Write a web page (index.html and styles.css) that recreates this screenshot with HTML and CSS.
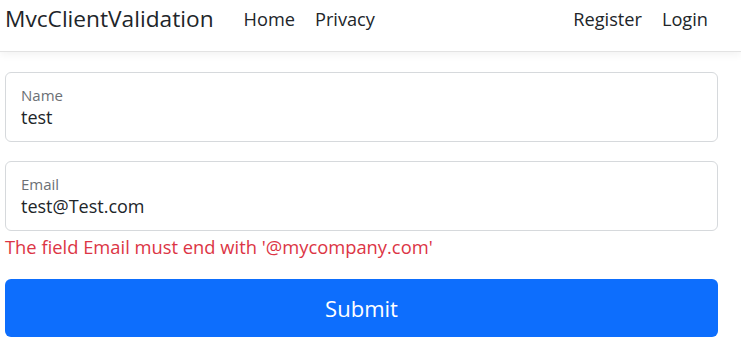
FILE: index.html
```html
<!DOCTYPE html>
<html lang="en">
<head>
<meta charset="utf-8">
<title>MvcClientValidation</title>
<link rel="stylesheet" href="styles.css">
</head>
<body>
<header class="navbar">
  <div class="nav-inner">
    <a class="brand" href="#">MvcClientValidation</a>
    <ul class="nav-links">
      <li><a href="#">Home</a></li>
      <li><a href="#">Privacy</a></li>
    </ul>
    <ul class="nav-links nav-right">
      <li><a href="#">Register</a></li>
      <li><a href="#">Login</a></li>
    </ul>
  </div>
</header>
<main class="container">
  <form class="form">
    <div class="floating">
      <label class="float-label">Name</label>
      <div class="float-value">test</div>
    </div>
    <div class="floating">
      <label class="float-label">Email</label>
      <div class="float-value">test@Test.com</div>
    </div>
    <div class="error">The field Email must end with '@mycompany.com'</div>
    <button type="button" class="btn-submit">Submit</button>
  </form>
</main>
</body>
</html>
```

FILE: styles.css
```css
* { box-sizing: border-box; }
html, body { margin: 0; padding: 0; background: #fff; }
body {
  font-family: "Open Sans", "Noto Sans", sans-serif;
  color: #212529;
  font-size: 18px;
}
a { text-decoration: none; color: inherit; }
.navbar {
  height: 52px;
  border-bottom: 1px solid #e3e3e3;
  box-shadow: 0 3px 8px rgba(0,0,0,0.05);
  background: #fff;
}
.nav-inner {
  display: flex;
  align-items: center;
  height: 37px;
  padding: 0 23px 0 5px;
}
.brand {
  font-size: 22.7px;
  margin-right: 20px;
  color: #212529;
}
.nav-links {
  display: flex;
  list-style: none;
  margin: 0;
  padding: 0;
}
.nav-links a {
  display: block;
  padding: 0 10px;
  font-size: 18.2px;
  color: #212529;
}
.nav-right { margin-left: auto; }
.container {
  padding: 20px 23px 0 5px;
}
.floating {
  height: 70px;
  border: 1px solid #d6d9dc;
  border-radius: 6px;
  padding: 13px 15px 0 15px;
  margin-bottom: 19px;
}
.float-label {
  display: block;
  font-size: 15px;
  line-height: 18px;
  color: #6c7075;
}
.float-value {
  font-size: 18px;
  line-height: 26px;
  margin-top: 0;
}
.floating + .floating { margin-bottom: 4px; }
.error {
  color: #dc3545;
  font-size: 18.35px;
  line-height: 24px;
  margin-bottom: 20px;
}
.btn-submit {
  display: block;
  width: 100%;
  height: 58px;
  border: none;
  border-radius: 6px;
  background: #0d6efd;
  color: #fff;
  font-family: inherit;
  font-size: 22px;
}
```
